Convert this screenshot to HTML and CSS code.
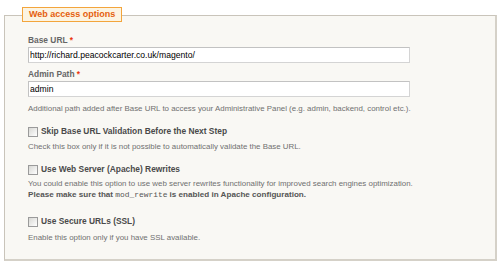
FILE: index.html
```html
<!DOCTYPE html>
<html lang="en">
<head>
    <meta charset="UTF-8">
    <meta name="viewport" content="width=device-width, initial-scale=1.0">
    <title>Magento Installation - Configuration</title>
    <link rel="stylesheet" href="styles.css">
</head>
<body>
    <div class="fieldset">
        <div class="legend">Web access options</div>

        <div class="field field-base">
            <label class="field-label" for="base_url">Base URL <em>*</em></label>
            <input class="input-text" id="base_url" type="text" value="http://richard.peacockcarter.co.uk/magento/">
        </div>

        <div class="field field-admin">
            <label class="field-label" for="admin_frontname">Admin Path <em>*</em></label>
            <input class="input-text" id="admin_frontname" type="text" value="admin">
            <p class="note">Additional path added after Base URL to access your Administrative Panel (e.g. admin, backend, control etc.).</p>
        </div>

        <div class="field field-check">
            <div class="control">
                <input class="checkbox" id="skip_url_validation" type="checkbox">
                <label for="skip_url_validation">Skip Base URL Validation Before the Next Step</label>
            </div>
            <p class="note">Check this box only if it is not possible to automatically validate the Base URL.</p>
        </div>

        <div class="field field-check">
            <div class="control">
                <input class="checkbox" id="use_rewrites" type="checkbox">
                <label for="use_rewrites">Use Web Server (Apache) Rewrites</label>
            </div>
            <p class="note note-rewrites">You could enable this option to use web server rewrites functionality for improved search engines optimization.<br>
                <strong>Please make sure that <code>mod_rewrite</code> is enabled in Apache configuration.</strong></p>
        </div>

        <div class="field field-check field-secure">
            <div class="control">
                <input class="checkbox" id="use_secure" type="checkbox">
                <label for="use_secure">Use Secure URLs (SSL)</label>
            </div>
            <p class="note">Enable this option only if you have SSL available.</p>
        </div>
    </div>
</body>
</html>
```

FILE: styles.css
```css
:root {
    --label-color: #666666;
    --note-color: #707070;
    --required: #eb340a;
    --legend-text: #e5600e;
    --legend-border: #f3a53c;
    --legend-bg: #fcf4e2;
    --fieldset-bg: #f9f8f4;
    --fieldset-border: #c9c4ba;
}

* {
    margin: 0;
    padding: 0;
    box-sizing: border-box;
}

body {
    font-family: "Liberation Sans", Arial, sans-serif;
    background: #ffffff;
    color: var(--label-color);
}

.fieldset {
    margin: 15px 3px 0 4px;
    padding: 0 20px 16px 23px;
    background: var(--fieldset-bg);
    border: 1px solid var(--fieldset-border);
    border-right: 2px solid #d5d1c8;
    border-bottom: 2px solid #d5d1c8;
}

.legend {
    width: fit-content;
    margin: -9px 0 0 -6px;
    padding: 0 6px;
    height: 15px;
    line-height: 13px;
    font-size: 9px;
    font-weight: bold;
    color: var(--legend-text);
    background: var(--legend-bg);
    border: 1px solid var(--legend-border);
}

.field-base {
    margin-top: 13px;
}

.field-admin {
    margin-top: 6px;
}

.field-check {
    margin-top: 12px;
}

.field-secure {
    margin-top: 16px;
}

.field-label {
    display: block;
    font-size: 8.4px;
    line-height: 11px;
    font-weight: bold;
    color: var(--label-color);
}

.field-label em {
    font-style: normal;
    color: var(--required);
}

.input-text {
    display: block;
    width: 382px;
    height: 16px;
    margin-top: 1px;
    padding: 0 2px 0 1px;
    font-family: "Liberation Sans", Arial, sans-serif;
    font-size: 8.6px;
    color: #000000;
    background: #ffffff;
    border: 1px solid;
    border-color: #c2c2c2 #d4d4d4 #d4d4d4 #c2c2c2;
    outline: none;
}

.note {
    margin-top: 4px;
    font-size: 7.9px;
    line-height: 11px;
    color: var(--note-color);
}

.field-admin .note {
    margin-top: 6px;
}

.field-secure .note {
    margin-top: 5px;
}

.note-rewrites {
    line-height: 10.5px;
}

.note strong {
    font-size: 8.1px;
    color: #555555;
}

.note code {
    font-family: "Liberation Mono", "Courier New", monospace;
    font-weight: normal;
    font-size: 7.9px;
}

.control {
    display: flex;
    align-items: center;
    gap: 3px;
    height: 11px;
    font-size: 8.4px;
    line-height: 11px;
    font-weight: bold;
    color: #4a4a4a;
}

.checkbox {
    appearance: none;
    width: 10px;
    height: 10px;
    flex: none;
    border: 1px solid #9a9a9a;
    background: linear-gradient(135deg, #d8d8d4, #ffffff);
}
```
